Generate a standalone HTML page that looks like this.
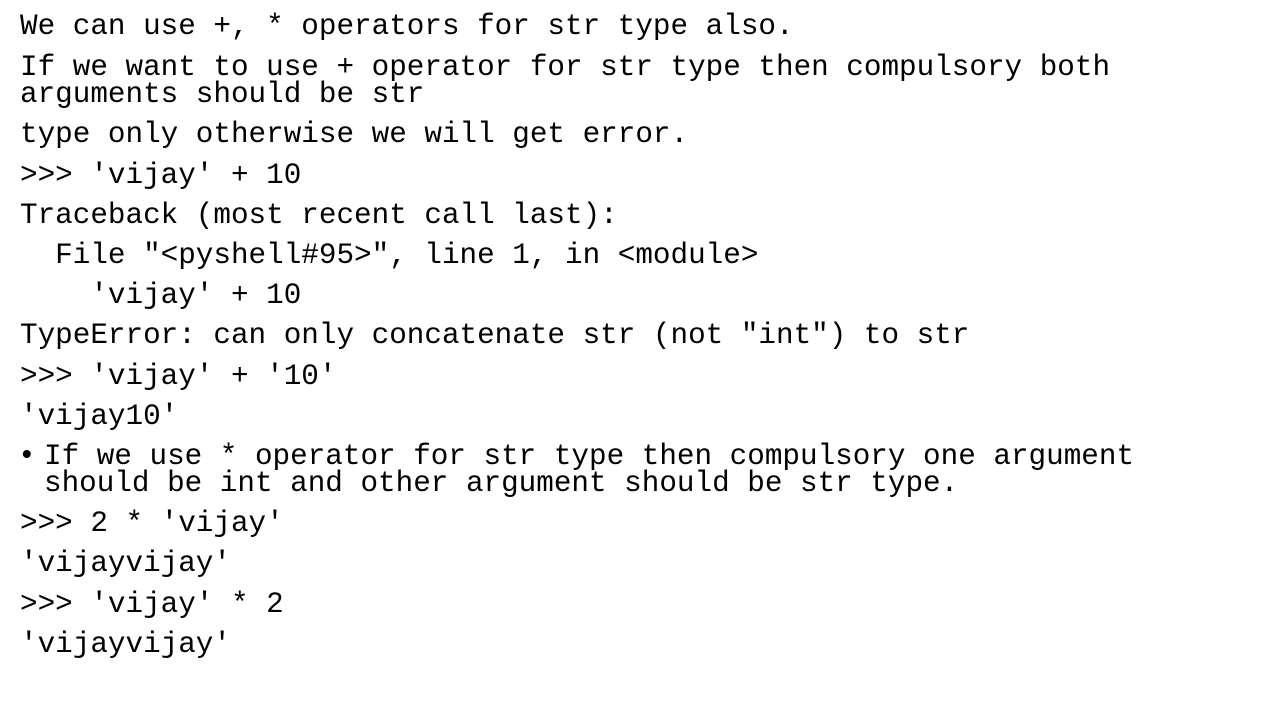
<!DOCTYPE html>
<html><head><meta charset="utf-8"><style>
html,body{margin:0;padding:0;background:#fff;width:1280px;height:720px;overflow:hidden}
.l{position:absolute;left:20px;font-family:"Liberation Mono",monospace;font-size:29.3px;line-height:30px;color:#000;white-space:pre}
</style></head><body>
<div class="l" style="top:12px">We can use +, * operators for str type also.</div>
<div class="l" style="top:53px">If we want to use + operator for str type then compulsory both</div>
<div class="l" style="top:80px">arguments should be str</div>
<div class="l" style="top:120px">type only otherwise we will get error.</div>
<div class="l" style="top:161px">&gt;&gt;&gt; 'vijay' + 10</div>
<div class="l" style="top:201px">Traceback (most recent call last):</div>
<div class="l" style="top:241px">  File "&lt;pyshell#95&gt;", line 1, in &lt;module&gt;</div>
<div class="l" style="top:281px">    'vijay' + 10</div>
<div class="l" style="top:321px">TypeError: can only concatenate str (not "int") to str</div>
<div class="l" style="top:362px">&gt;&gt;&gt; 'vijay' + '10'</div>
<div class="l" style="top:402px">'vijay10'</div>
<div class="l" style="top:442px;left:18px">•</div>
<div class="l" style="top:442px;left:44px">If we use * operator for str type then compulsory one argument</div>
<div class="l" style="top:469px;left:44px">should be int and other argument should be str type.</div>
<div class="l" style="top:509px">&gt;&gt;&gt; 2 * 'vijay'</div>
<div class="l" style="top:549px">'vijayvijay'</div>
<div class="l" style="top:590px">&gt;&gt;&gt; 'vijay' * 2</div>
<div class="l" style="top:630px">'vijayvijay'</div>
</body></html>
